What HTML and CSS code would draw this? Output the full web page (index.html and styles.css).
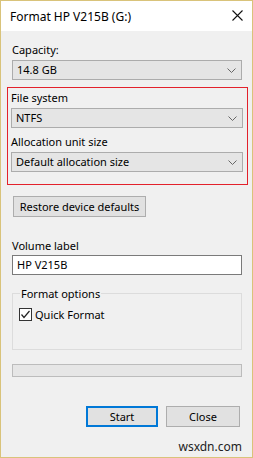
FILE: index.html
```html
<!DOCTYPE html>
<html lang="en">
<head>
<meta charset="utf-8">
<title>Format HP V215B (G:)</title>
<link rel="stylesheet" href="styles.css">
</head>
<body>
<div class="window">
  <div class="titlebar">
    <span class="title">Format HP V215B (G:)</span>
    <svg class="close" width="11" height="11" viewBox="0 0 11 11"><path d="M0.5 0.5 L10.5 10.5 M10.5 0.5 L0.5 10.5" stroke="#111" stroke-width="1.1" fill="none"/></svg>
  </div>
  <div class="content">
    <div class="lbl lbl-first">Capacity:</div>
    <div class="select"><span>14.8 GB</span><svg class="chev" width="9" height="5" viewBox="0 0 9 5"><path d="M0.5 0.5 L4.5 4.5 L8.5 0.5" stroke="#666" stroke-width="1" fill="none"/></svg></div>
    <div class="highlight">
      <div class="lbl">File system</div>
      <div class="select"><span>NTFS</span><svg class="chev" width="9" height="5" viewBox="0 0 9 5"><path d="M0.5 0.5 L4.5 4.5 L8.5 0.5" stroke="#666" stroke-width="1" fill="none"/></svg></div>
      <div class="lbl lbl-gap">Allocation unit size</div>
      <div class="select"><span>Default allocation size</span><svg class="chev" width="9" height="5" viewBox="0 0 9 5"><path d="M0.5 0.5 L4.5 4.5 L8.5 0.5" stroke="#666" stroke-width="1" fill="none"/></svg></div>
    </div>
    <div class="btn restore">Restore device defaults</div>
    <div class="lbl lbl-volume">Volume label</div>
    <div class="input">HP V215B</div>
    <fieldset class="group">
      <legend>Format options</legend>
      <div class="check-row">
        <span class="checkbox"><svg width="11" height="11" viewBox="0 0 11 11"><path d="M1.5 5.5 L4 8.5 L9.5 2" stroke="#222" stroke-width="1.2" fill="none"/></svg></span>
        <span>Quick Format</span>
      </div>
    </fieldset>
    <div class="progress"></div>
    <div class="actions">
      <div class="btn btn-primary">Start</div>
      <div class="btn btn-close">Close</div>
    </div>
    <div class="watermark">wsxdn.com</div>
  </div>
</div>
</body>
</html>
```
FILE: styles.css
```css
* { box-sizing: border-box; }
html, body { margin: 0; padding: 0; }
body {
  font-family: "Noto Sans", "Open Sans", sans-serif;
  font-size: 11px;
  color: #000;
  background: #f0f0f0;
}
.window {
  width: 253px;
  height: 458px;
  border: 1px solid #d9c37a;
  background: #f0f0f0;
  display: flex;
  flex-direction: column;
  overflow: hidden;
}
.titlebar {
  height: 30px;
  background: #fff;
  display: flex;
  align-items: center;
  justify-content: space-between;
  padding: 0 9px 0 9px;
}
.title {
  font-size: 12px;
  color: #000;
}
.close { margin-right: 0; margin-top: -1px; }
.content {
  display: flex;
  flex-direction: column;
  padding: 11px 10px 0 11px;
}
.lbl {
  line-height: 15px;
  height: 15px;
}
.select {
  margin-top: 3px;
  height: 20px;
  background: #e5e5e5;
  border: 1px solid #acacac;
  display: flex;
  align-items: center;
  justify-content: space-between;
  padding: 0 5px 0 4px;
  line-height: 18px;
}
.chev { display: block; }
.highlight {
  margin: 8px -5px 0 -4px;
  box-shadow: 0 0 0 1px #e3212b;
  background: #f0f0f0;
  padding: 2px 4px 12px 3px;
  display: flex;
  flex-direction: column;
}
.lbl-gap { margin-top: 6px; }
.btn {
  height: 21px;
  background: #e1e1e1;
  border: 1px solid #adadad;
  display: flex;
  align-items: center;
  justify-content: center;
}
.restore {
  margin: 12px 0 0 1px;
  width: 133px;
}
.lbl-volume { margin-top: 21px; }
.input {
  margin-top: 2px;
  height: 20px;
  background: #fff;
  border: 1px solid #7a7a7a;
  padding: 0 4px;
  line-height: 18px;
}
.group {
  margin: 11px 0 0 0;
  border: 1px solid #dcdcdc;
  padding: 6px 6px 27px 6px;
  min-width: 0;
}
.group legend {
  padding: 0 1px;
  margin-left: 1px;
  line-height: 15px;
}
.check-row {
  display: flex;
  align-items: center;
  gap: 3px;
  height: 15px;
  line-height: 15px;
}
.checkbox {
  width: 13px;
  height: 13px;
  border: 1px solid #333;
  background: #fff;
  display: flex;
  align-items: center;
  justify-content: center;
}
.checkbox svg { display: block; }
.progress {
  margin-top: 14px;
  height: 13px;
  background: #e6e6e6;
  border: 1px solid #bcbcbc;
}
.actions {
  margin-top: 29px;
  display: flex;
  justify-content: flex-end;
  gap: 8px;
  padding-right: 2px;
}
.btn-primary {
  width: 72px;
  border: 2px solid #0078d7;
}
.btn-close { width: 74px; }
.watermark {
  margin-top: 12px;
  line-height: 15px;
  font-size: 12px;
  text-align: right;
  color: #222;
  padding-right: 0;
}
```
